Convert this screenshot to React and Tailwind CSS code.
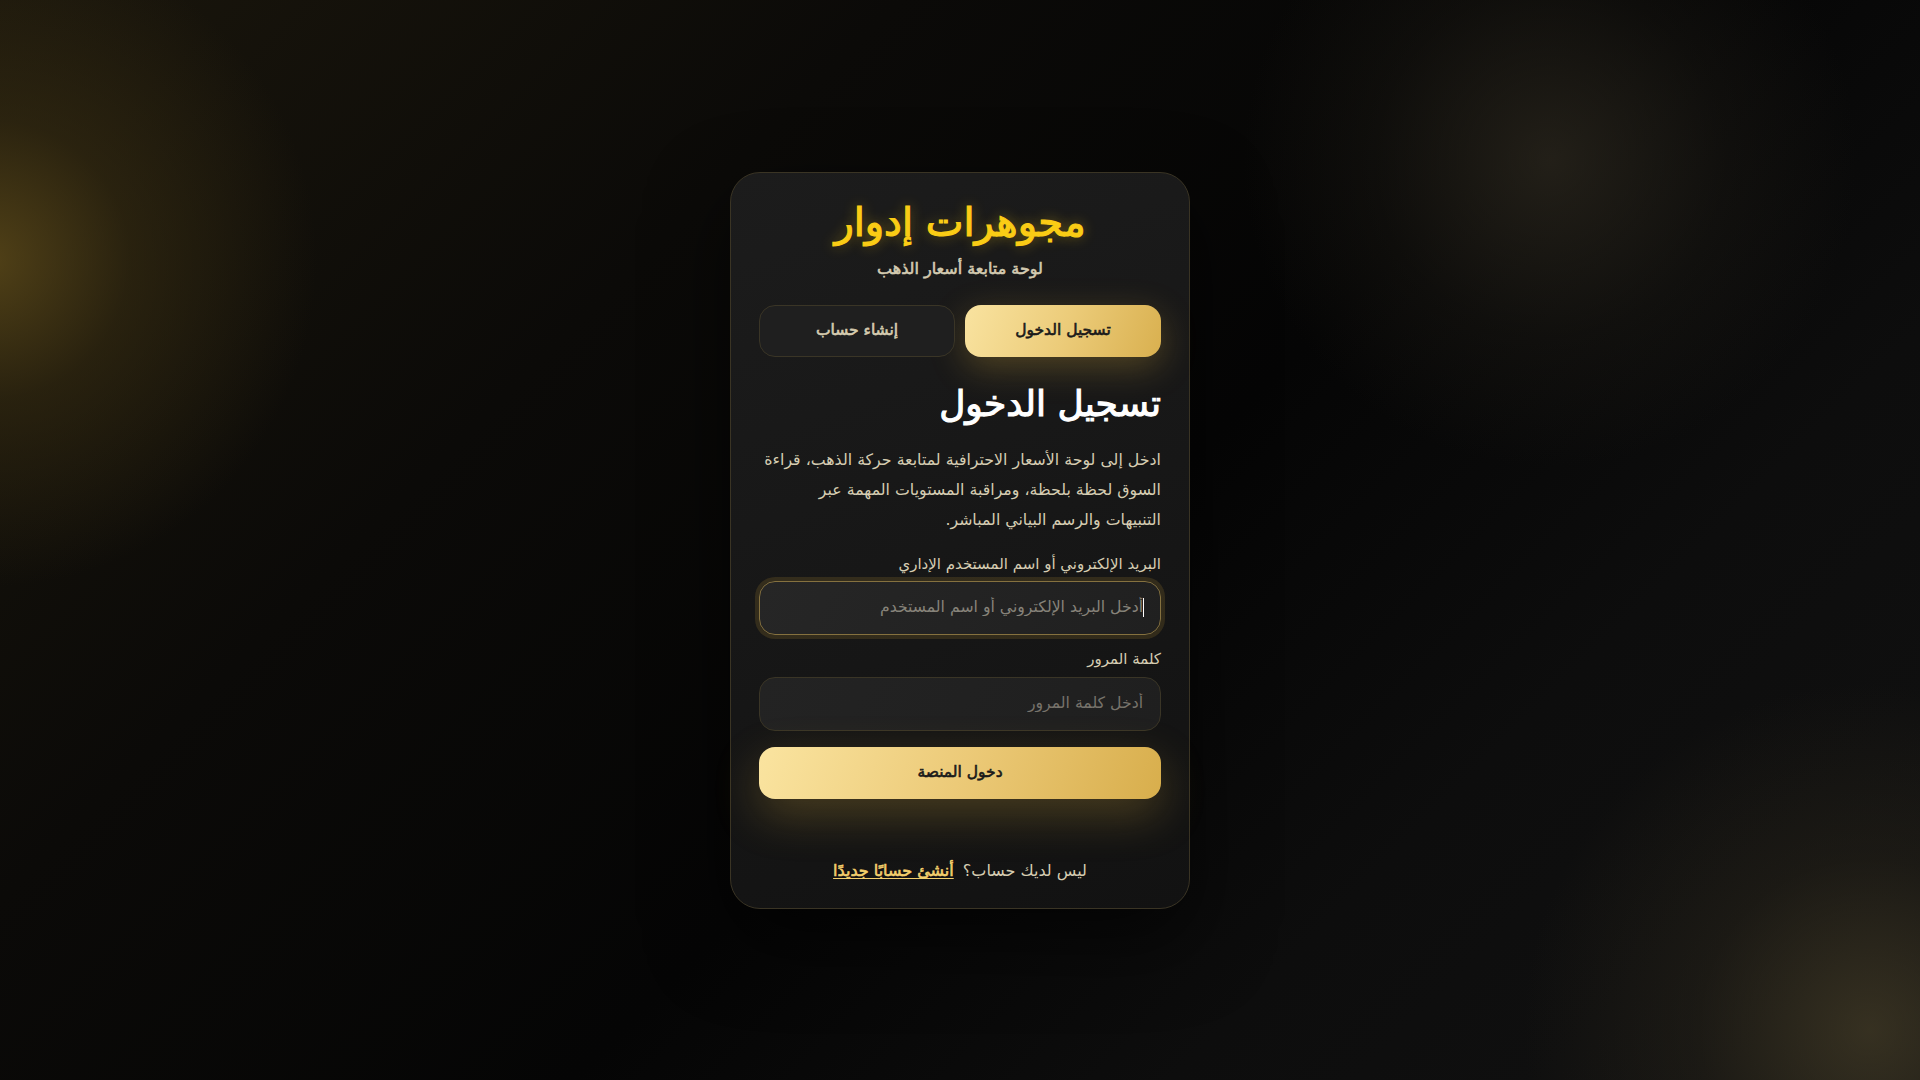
import React, { useState } from 'react';

const font = { fontFamily: '"DejaVu Sans", "Noto Sans", sans-serif' };

// the reference's bold is a synthetic bold on the book face, so thicken with a stroke
const tabOn =
  'h-[52px] rounded-[16px] bg-[linear-gradient(110deg,#f9e3a0_0%,#eccc7a_50%,#d9b04f_100%)] text-[15.5px] text-[#1a1a1a] [-webkit-text-stroke:0.6px_currentColor] shadow-[0_10px_35px_rgba(212,170,60,0.3)]';
const tabOff =
  'h-[52px] rounded-[16px] border border-[#3a3526] bg-[#1f1f1f] text-[15.5px] text-[#d6ccb0] [-webkit-text-stroke:0.6px_currentColor]';

const App = () => {
  const [tab, setTab] = useState('login');
  const [form, setForm] = useState({ user: '', password: '' });

  return (
    <div
      dir="rtl"
      style={font}
      className="relative min-h-screen w-full overflow-hidden bg-[#080808] flex items-start justify-center"
    >
      {/* background glows */}
      <div className="pointer-events-none absolute inset-0 bg-[linear-gradient(135deg,#1a160c_0%,#0b0a08_30%,#050505_55%,#0d0d0d_75%,#111111_100%)]" />
      <div className="pointer-events-none absolute -left-[340px] -top-[70px] h-[660px] w-[660px] rounded-full bg-[radial-gradient(circle,rgba(95,76,26,0.8)_0%,rgba(62,50,19,0.5)_30%,rgba(30,25,12,0)_70%)]" />
      <div className="pointer-events-none absolute -right-[300px] bottom-[-300px] h-[700px] w-[700px] rounded-full bg-[radial-gradient(circle,rgba(70,62,40,0.7)_0%,rgba(45,40,28,0.4)_35%,rgba(20,18,14,0)_70%)]" />
      <div className="pointer-events-none absolute right-[60px] -top-[150px] h-[620px] w-[620px] rounded-full bg-[radial-gradient(circle,rgba(50,45,34,0.65)_0%,rgba(34,31,24,0.32)_40%,rgba(20,18,14,0)_70%)]" />

      {/* card */}
      <div className="relative mt-[172px] w-[460px] rounded-[30px] border border-[#3a3424] bg-[linear-gradient(160deg,#1c1c1c_0%,#171717_50%,#121212_100%)] px-7 pt-7 pb-[25px] shadow-[0_30px_80px_rgba(0,0,0,0.6)]">
        <h1 className="text-center text-[40px] leading-[42px] text-[#facc15] [-webkit-text-stroke:1.2px_currentColor] [text-shadow:0_0_14px_rgba(250,204,21,0.45)]">
          مجوهرات إدوار
        </h1>
        <p className="mt-[14px] text-center text-[16px] leading-6 text-[#d4cbb1] [-webkit-text-stroke:0.6px_currentColor]">
          لوحة متابعة أسعار الذهب
        </p>

        {/* tabs */}
        <div className="mt-6 grid grid-cols-2 gap-[10px]">
          <button type="button" onClick={() => setTab('login')} className={tab === 'login' ? tabOn : tabOff}>
            تسجيل الدخول
          </button>
          <button type="button" onClick={() => setTab('register')} className={tab === 'register' ? tabOn : tabOff}>
            إنشاء حساب
          </button>
        </div>

        <h2 className="mt-[22px] text-right text-[36px] leading-[50px] text-white [-webkit-text-stroke:1.1px_currentColor]">
          تسجيل الدخول
        </h2>
        <p className="mt-4 text-right text-[15.8px] leading-[30px] text-[#d6cdb2]">
          ادخل إلى لوحة الأسعار الاحترافية لمتابعة حركة الذهب، قراءة السوق لحظة بلحظة، ومراقبة المستويات المهمة عبر التنبيهات والرسم البياني المباشر.
        </p>

        <form onSubmit={(e) => e.preventDefault()}>
          <label className="mt-[17px] block text-right text-[15px] leading-6 text-[#d6cdb2]">
            البريد الإلكتروني أو اسم المستخدم الإداري
          </label>
          <div className="relative mt-[5px]">
            <input
              autoFocus
              value={form.user}
              onChange={(e) => setForm((p) => ({ ...p, user: e.target.value }))}
              placeholder="أدخل البريد الإلكتروني أو اسم المستخدم"
              style={font}
              className="block h-[54px] w-full rounded-[16px] border border-[#85713f] bg-[linear-gradient(120deg,#262626,#202020)] px-[17px] pb-[3px] text-right text-[15.7px] text-[#e5e5e5] caret-white outline-none shadow-[0_0_0_4px_rgba(120,96,40,0.3)] placeholder:text-[#87837a]"
            />
            {form.user === '' && (
              <span className="pointer-events-none absolute right-[17px] top-[17px] h-[19px] w-px bg-white" />
            )}
          </div>

          <label className="mt-3 block text-right text-[15px] leading-6 text-[#d6cdb2]">
            كلمة المرور
          </label>
          <input
            type="password"
            value={form.password}
            onChange={(e) => setForm((p) => ({ ...p, password: e.target.value }))}
            placeholder="أدخل كلمة المرور"
            style={font}
            className="mt-[6px] block h-[54px] w-full rounded-[16px] border border-[#3a3526] bg-[linear-gradient(120deg,#232323,#1f1f1f)] px-[17px] pb-[3px] text-right text-[15.7px] text-[#e5e5e5] outline-none placeholder:text-[#77736b]"
          />

          <button
            type="submit"
            className="mt-4 block h-[52px] w-full rounded-[16px] bg-[linear-gradient(110deg,#fae4a0_0%,#ecca78_50%,#d8ae4c_100%)] text-[15.5px] text-[#1a1a1a] [-webkit-text-stroke:0.6px_currentColor] shadow-[0_16px_45px_rgba(212,170,60,0.28)]"
          >
            دخول المنصة
          </button>
        </form>

        <p className="mt-[60px] text-center text-[16px] leading-6 text-[#d6cdb2]">
          ليس لديك حساب؟{' '}
          <a href="#" className="mr-1 text-[#f3cf6c] underline underline-offset-2 [-webkit-text-stroke:0.6px_currentColor]">
            أنشئ حسابًا جديدًا
          </a>
        </p>
      </div>
    </div>
  );
};

export default App;
